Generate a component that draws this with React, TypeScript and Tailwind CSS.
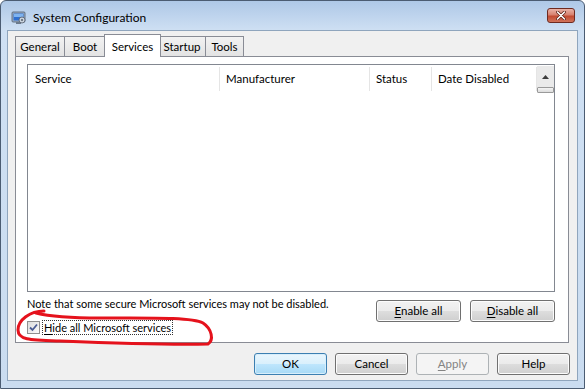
import React from 'react';

const font = { fontFamily: 'Lato, "Noto Sans", "Liberation Sans", sans-serif' };

function Btn({ label, ul, w, variant = 'normal' }: { label: string; ul?: number; w: string; variant?: 'normal' | 'default' | 'disabled' }) {
  const base = `${w} h-[22px] rounded-[3px] border text-[11.5px] flex items-center justify-center leading-none`;
  const styles =
    variant === 'default'
      ? 'border-[#3c7fb1] bg-[linear-gradient(#eaf6fd_0%,#d9f0fc_50%,#bee6fd_51%,#a7d9f5_100%)] text-black shadow-[inset_0_0_0_1px_#d7eefb]'
      : variant === 'disabled'
      ? 'border-[#adb2b5] bg-[#f4f4f4] text-[#838383]'
      : 'border-[#707070] bg-[linear-gradient(#f2f2f2_0%,#ebebeb_50%,#dddddd_51%,#cfcfcf_100%)] text-black shadow-[inset_0_0_0_1px_#fcfcfc]';
  const chars = label.split('');
  return (
    <div className={`${base} ${styles}`}>
      <span>
        {chars.map((c, i) => (
          <span key={i} className={i === ul ? 'underline underline-offset-2' : ''}>
            {c}
          </span>
        ))}
      </span>
    </div>
  );
}

function Tab({ label, w, selected }: { label: string; w: string; selected?: boolean }) {
  if (selected) {
    return (
      <div className={`${w} h-[23px] -mb-px -mx-[2px] z-10 border border-b-0 border-[#898c95] bg-white flex items-start justify-center pt-[3px] text-[11.5px]`}>
        {label}
      </div>
    );
  }
  return (
    <div className={`${w} h-[20px] border border-b-0 border-[#898c95] -ml-px first:ml-0 bg-[linear-gradient(#f2f2f2,#e3e3e3)] flex items-center justify-center text-[11.5px]`}>
      {label}
    </div>
  );
}

export default function App() {
  return (
    <div className="relative w-[585px] h-[389px] overflow-hidden bg-white" style={font}>
      <div className="w-full h-full rounded-t-[6px] border border-[#4b5c72] bg-[linear-gradient(#aec8e7_0px,#cfe0f3_30px,#cadcf0_100%)] flex flex-col px-[6px] pb-[7px]">
        {/* title bar */}
        <div className="h-[29px] flex items-center shrink-0 pt-[5px]">
          <svg width="16" height="16" viewBox="0 0 16 16" className="ml-[4px]">
            <rect x="1" y="2" width="13" height="10" rx="1" fill="#9fb0c4" stroke="#4b5a6e" strokeWidth="0.8" />
            <rect x="2.5" y="3.5" width="10" height="7" fill="#2f6fd0" />
            <rect x="3" y="4" width="9" height="3" fill="#7fb4f0" />
            <rect x="5" y="12" width="5" height="2" fill="#6b7a8c" />
            <circle cx="11" cy="10" r="3" fill="#c9d2dc" stroke="#55606e" strokeWidth="0.8" />
            <circle cx="11" cy="10" r="1" fill="#55606e" />
          </svg>
          <span className="ml-[6px] text-[12px] text-black">System Configuration</span>
          <div className="ml-auto mr-[3px] mb-[5px] w-[28px] h-[15px] rounded-[3px] border border-[#6e2a20] bg-[linear-gradient(#e9b3a8_0%,#d7816f_45%,#c24a31_55%,#d0735a_100%)] flex items-center justify-center">
            <svg width="10" height="9" viewBox="0 0 10 9">
              <path d="M1.5 1 L8.5 8 M8.5 1 L1.5 8" stroke="#5a1e14" strokeWidth="3" strokeLinecap="round" />
              <path d="M1.5 1 L8.5 8 M8.5 1 L1.5 8" stroke="#ffffff" strokeWidth="1.6" strokeLinecap="round" />
            </svg>
          </div>
        </div>

        {/* client area */}
        <div className="flex-1 border border-[#8fa5bd] bg-[#f0f0f0] flex flex-col">
          {/* tabs */}
          <div className="h-[25px] flex items-end pl-[7px] shrink-0">
            <Tab label="General" w="w-[50px]" />
            <Tab label="Boot" w="w-[42px]" />
            <Tab label="Services" w="w-[57px]" selected />
            <Tab label="Startup" w="w-[48px]" />
            <Tab label="Tools" w="w-[39px]" />
          </div>

          {/* panel */}
          <div className="ml-[7px] mr-[8px] h-[287px] border border-[#898c95] bg-white flex flex-col pl-[11px] pr-[13px] pt-[7px]">
            {/* list */}
            <div className="h-[228px] border border-[#828790] bg-white flex shrink-0">
              <div className="flex-1 flex flex-col">
                <div className="h-[26px] pt-[2px] flex text-[11.5px] text-black">
                  <div className="w-[192px] border-r border-[#e5e5e5] pl-[7px] flex items-center">Service</div>
                  <div className="w-[150px] border-r border-[#e5e5e5] pl-[6px] flex items-center">Manufacturer</div>
                  <div className="w-[62px] border-r border-[#e5e5e5] pl-[6px] flex items-center">Status</div>
                  <div className="flex-1 border-r border-[#e5e5e5] pl-[6px] flex items-center">Date Disabled</div>
                </div>
              </div>
              <div className="w-[17px] flex flex-col pt-[1px]">
                <div className="h-[21px] bg-[#eaeaea] flex items-center justify-center">
                  <svg width="7" height="4" viewBox="0 0 7 4">
                    <path d="M0 4 L3.5 0 L7 4 Z" fill="#3c3c3c" />
                  </svg>
                </div>
                <div className="h-[6px] border border-[#9a9a9a] rounded-[1px] bg-[linear-gradient(#f4f4f4,#dcdcdc)]" />
              </div>
            </div>

            <div className="flex justify-between mt-[4px]">
              <div className="flex flex-col">
                <div className="text-[11px] leading-[15px] text-black whitespace-nowrap">Note that some secure Microsoft services may not be disabled.</div>
                <div className="flex items-center mt-[9px]">
                  <div className="w-[13px] h-[13px] border border-[#8f8f8f] bg-[linear-gradient(135deg,#dcdcdc,#fbfbfb)] flex items-center justify-center">
                    <svg width="9" height="9" viewBox="0 0 9 9">
                      <path d="M1 4.5 L3.5 7 L8 1.5" fill="none" stroke="#4a5c94" strokeWidth="1.8" />
                    </svg>
                  </div>
                  <div className="ml-[2px] px-[1px] border border-dotted border-[#333] text-[11px] leading-[13px] text-black whitespace-nowrap">
                    <span className="underline underline-offset-2">H</span>ide all Microsoft services
                  </div>
                </div>
              </div>
              <div className="flex gap-[9px] mt-[4px]">
                <Btn label="Enable all" ul={0} w="w-[85px]" />
                <Btn label="Disable all" ul={0} w="w-[85px]" />
              </div>
            </div>
          </div>

          {/* bottom buttons */}
          <div className="flex justify-end gap-[8px] mr-[7px] mt-[10px]">
            <Btn label="OK" w="w-[73px]" variant="default" />
            <Btn label="Cancel" w="w-[73px]" />
            <Btn label="Apply" ul={0} w="w-[73px]" variant="disabled" />
            <Btn label="Help" w="w-[73px]" />
          </div>
        </div>
      </div>

      {/* red freehand circle */}
      <svg className="absolute inset-0 pointer-events-none" width="585" height="389" viewBox="0 0 585 389">
        <path
          d="M44 311 C30 311 18 320 18 330 C18 340 30 340 60 341 C110 343 170 345 208 344 C214 340 212 329 203 323 C192 317 150 318 100 318 C70 318 52 317 36 313"
          fill="none"
          stroke="#e5121c"
          strokeWidth="3"
          strokeLinecap="round"
        />
      </svg>
    </div>
  );
}
